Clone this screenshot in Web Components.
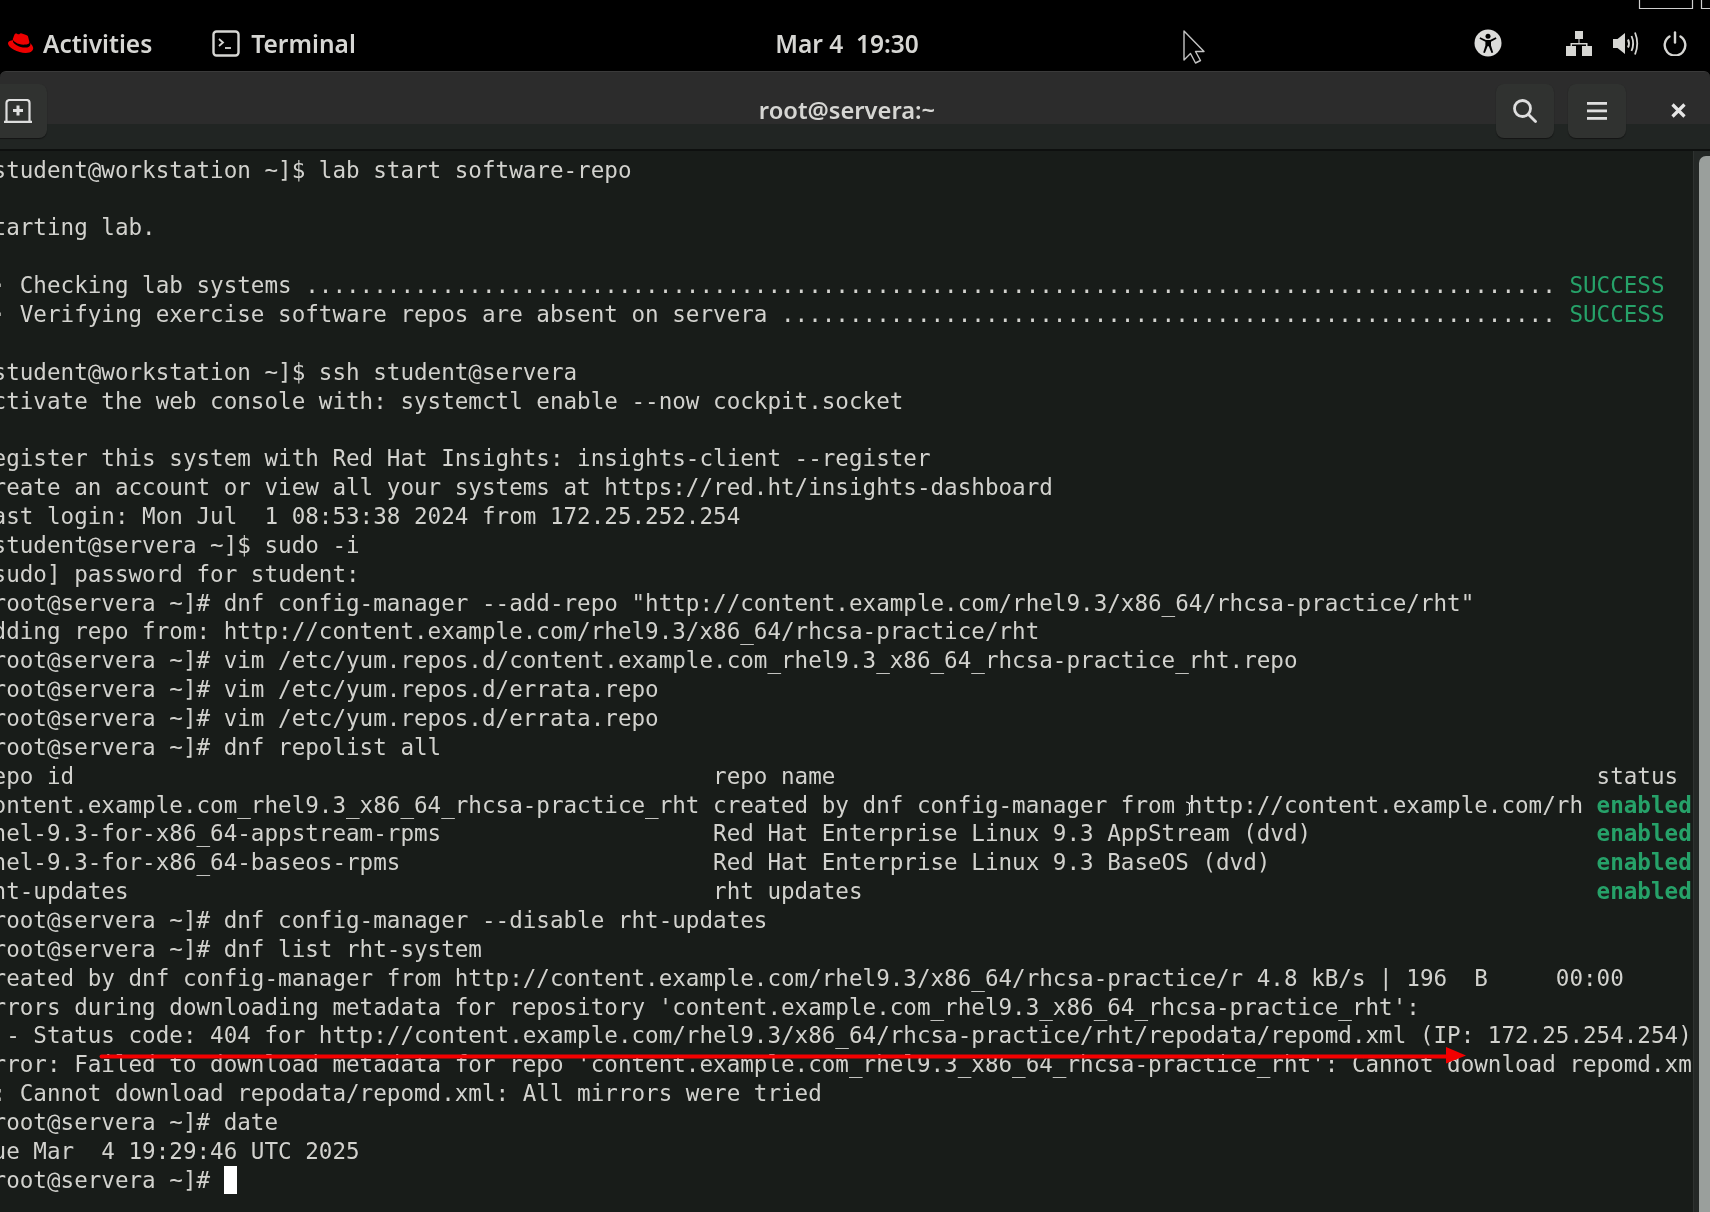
<!DOCTYPE html>
<html><head><meta charset="utf-8"><style>
html,body{margin:0;height:100%;background:#000;overflow:hidden}
body{width:1710px;height:1212px;display:flex;flex-direction:column;position:relative}
</style></head><body>
<top-panel></top-panel>
<term-window></term-window>
<screen-overlay></screen-overlay>
<script>
const UI='"Noto Sans","Open Sans",sans-serif';
customElements.define('top-panel',class extends HTMLElement{constructor(){super();this.attachShadow({mode:'open'}).innerHTML=`<style>
:host{display:grid;grid-template-columns:1fr auto 1fr;align-items:center;height:71px;flex:none;background:#000;color:#d6d6d3;font:600 24.500px ${UI};padding:15px 16px 0 0;box-sizing:border-box;filter:blur(.55px)}
.l,.r{display:flex;align-items:center}
.l{padding-left:8px}
.r{justify-content:flex-end;padding-right:7px}
svg{display:block;flex:none}
.act{margin-left:9px}
.tico{margin-left:60px}
.tt{margin-left:11px}
.clock{white-space:pre}
</style>
<div class="l">
<svg width="26" height="21" viewBox="0 0 26 21"><path fill="#e00" d="M17.3 11.6c1.7 0 4.1-.4 4.1-2.3 0-.2 0-.3-.1-.5l-1-4.400c-.2-1-.4-1.400-2.200-2.300C16.700 1.400 13.700.2 12.800.2c-.8 0-1.100 1.100-2.100 1.100S9 .5 8.100.5 6.600 1.100 6.200 2.300c0 0-1.200 3.400-1.400 3.900 0 .1 0 .2 0 .3 0 1.400 5.400 5.800 12.500 5.100z"/><path fill="#e00" d="M22.100 9.900c.3 1.200.3 1.300.3 1.500 0 2-2.200 3.100-5.100 3.100C10.700 14.500 5 10.700 5 8.200c0-.4.1-.7.200-1C2.800 7.300 0 8 0 10.600 0 14.800 9.900 20 17.700 20c6 0 7.500-2.700 7.500-4.900 0-1.700-1.500-3.700-3.100-5.200z"/></svg>
<span class="act">Activities</span>
<svg class="tico" width="28" height="27" viewBox="0 0 28 27" fill="none" stroke="#d6d6d3"><rect x="1.500" y="1.500" width="25" height="24" rx="3" stroke-width="2.400"/><path d="M7 9l4 3.500-4 3.500" stroke-width="1.800"/><path d="M13 18h6" stroke-width="1.800"/></svg>
<span class="tt">Terminal</span>
</div>
<div class="clock">Mar 4  19:30</div>
<div class="r">
<svg width="28" height="28" viewBox="0 0 28 28" style="margin-right:64px"><circle cx="14" cy="14" r="13.500" fill="#dcdcda"/><circle cx="14" cy="7.300" r="2.500" fill="#000"/><path fill="#000" d="M5.500 9.800l.7-1.500L12 11h4l5.800-2.700.7 1.500-5.500 3v3.700l2.200 7-1.700.6-2.700-6.800h-1.200l-2.700 6.800-1.700-.6 2.200-7v-3.700z"/></svg>
<svg width="26" height="25" viewBox="0 0 26 25" style="margin-right:21px" fill="#d6d6d3"><rect x="9" y="0" width="8" height="8"/><rect x="0" y="15" width="10" height="10"/><rect x="16" y="15" width="10" height="10"/><path d="M12.500 8v4H4.500v3h1.500v-1.500h14V15h1.500v-3H13.500V8z"/></svg>
<svg width="26" height="25" viewBox="0 0 26 25" style="margin-right:24px" fill="none" stroke="#d6d6d3"><path fill="#d6d6d3" stroke="none" d="M0 8h4.500L12 2v21l-7.500-6H0z"/><path d="M15 8.500q2 4 0 8" stroke-width="2"/><path d="M18.500 5q3.300 7.500 0 15" stroke-width="1.800"/><path d="M22 1.500q4.500 11 0 22" stroke-width="1.800"/></svg>
<svg width="24" height="25" viewBox="0 0 24 25" fill="none" stroke="#d6d6d3" stroke-width="2.400" stroke-linecap="round"><path d="M12 1.500v10"/><path d="M6.500 5.500a10.300 10.300 0 1 0 11 0"/></svg>
</div>`}});

customElements.define('tool-btn',class extends HTMLElement{constructor(){super();this.attachShadow({mode:'open'}).innerHTML=`<style>
:host{display:flex;align-items:center;justify-content:center;width:58px;height:54px;flex:none;box-sizing:border-box;border-radius:8px;background:#303230;box-shadow:0 1px 1px #141514}
</style><slot></slot>`}});

customElements.define('header-bar',class extends HTMLElement{constructor(){super();this.attachShadow({mode:'open'}).innerHTML=`<style>
:host{display:grid;grid-template-columns:1fr auto 1fr;align-items:center;height:80px;padding-right:16px;flex:none;box-sizing:border-box;background:linear-gradient(#2c2c2c 0,#2c2c2c 68%,#212523 68%,#212523 100%);border-top:1px solid #3a3a3a;border-bottom:2px solid #0e100f;border-radius:6px 6px 0 0;color:#d6d6d3;filter:blur(.5px)}
.l,.r{display:flex;align-items:center}
.l{margin-left:-11px}
.r{justify-content:flex-end}
.t{font:600 23.700px ${UI};margin-top:-1px}
tool-btn+tool-btn{margin-left:14px}
.x{margin:0 8px 0 45px}
svg{display:block}
</style>
<div class="l"><tool-btn><svg width="28" height="24" viewBox="0 0 28 24" fill="none" stroke="#dedede" stroke-width="2.200"><path d="M2.500 22.500V4a3 3 0 0 1 3-3h17a3 3 0 0 1 3 3v18.500M0 22.800h28"/><path stroke-width="3" d="M14 6.500v10M9 11.500h10"/></svg></tool-btn></div>
<div class="t">root@servera:~</div>
<div class="r">
<tool-btn><svg width="24" height="24" viewBox="0 0 24 24" fill="none" stroke="#dedede" stroke-width="2.800" stroke-linecap="round"><circle cx="9.500" cy="9.500" r="8"/><path d="M15.500 15.500l7 7"/></svg></tool-btn>
<tool-btn><svg width="20" height="18" viewBox="0 0 20 18" fill="#dedede"><rect width="20" height="2.800" y="0"/><rect width="20" height="2.800" y="7.500"/><rect width="20" height="2.800" y="15"/></svg></tool-btn>
<svg class="x" width="15" height="15" viewBox="0 0 15 15" stroke="#e6e6e6" stroke-width="3.200"><path d="M1.500 1.500l12 12M13.500 1.500l-12 12"/></svg>
</div>`}});

const P='[root@servera ~]# ',S='[student@workstation ~]$ ',U='[student@servera ~]$ ';
const LINES=[
S+'lab start software-repo','','Starting lab.','',
' · Checking lab systems '+'.'.repeat(92)+' <g>SUCCESS</g>',
' · Verifying exercise software repos are absent on servera '+'.'.repeat(57)+' <g>SUCCESS</g>','',
S+'ssh student@servera',
'Activate the web console with: systemctl enable --now cockpit.socket','',
'Register this system with Red Hat Insights: insights-client --register',
'Create an account or view all your systems at https://red.ht/insights-dashboard',
'Last login: Mon Jul  1 08:53:38 2024 from 172.25.252.254',
U+'sudo -i','[sudo] password for student:',
P+'dnf config-manager --add-repo "http://content.example.com/rhel9.3/x86_64/rhcsa-practice/rht"',
'Adding repo from: http://content.example.com/rhel9.3/x86_64/rhcsa-practice/rht',
P+'vim /etc/yum.repos.d/content.example.com_rhel9.3_x86_64_rhcsa-practice_rht.repo',
P+'vim /etc/yum.repos.d/errata.repo',P+'vim /etc/yum.repos.d/errata.repo',P+'dnf repolist all',
'repo id'.padEnd(54)+'repo name'.padEnd(65)+'status',
'content.example.com_rhel9.3_x86_64_rhcsa-practice_rht created by dnf config-manager from http://content.example.com/rh <b>enabled</b>',
'rhel-9.3-for-x86_64-appstream-rpms'.padEnd(54)+'Red Hat Enterprise Linux 9.3 AppStream (dvd)'.padEnd(65)+'<b>enabled</b>',
'rhel-9.3-for-x86_64-baseos-rpms'.padEnd(54)+'Red Hat Enterprise Linux 9.3 BaseOS (dvd)'.padEnd(65)+'<b>enabled</b>',
'rht-updates'.padEnd(54)+'rht updates'.padEnd(65)+'<b>enabled</b>',
P+'dnf config-manager --disable rht-updates',P+'dnf list rht-system',
'Created by dnf config-manager from http://content.example.com/rhel9.3/x86_64/rhcsa-practice/r 4.8 kB/s | 196  B     00:00',
"Errors during downloading metadata for repository 'content.example.com_rhel9.3_x86_64_rhcsa-practice_rht':",
'  - Status code: 404 for http://content.example.com/rhel9.3/x86_64/rhcsa-practice/rht/repodata/repomd.xml (IP: 172.25.254.254)',
"Error: Failed to download metadata for repo 'content.example.com_rhel9.3_x86_64_rhcsa-practice_rht': Cannot download repomd.xm",
'l: Cannot download repodata/repomd.xml: All mirrors were tried',
P+'date','Tue Mar  4 19:29:46 UTC 2025',P+'<i></i>'];

customElements.define('term-view',class extends HTMLElement{constructor(){super();this.attachShadow({mode:'open'}).innerHTML=`<style>
:host{display:block;flex:1;min-width:0;overflow:hidden;box-sizing:border-box;padding-top:4.700px;color:#d2d2ce;font:22.580px/28.870px "DejaVu Sans Mono",monospace;filter:blur(.5px)}
.c{margin-left:-21px}
.ln{white-space:pre;height:28.870px}
g-t{color:#26a269}
b{color:#26a269;font-weight:700}
i{display:inline-block;width:13.600px;height:28px;background:#fff;vertical-align:top}
</style><div class="c">${LINES.map(l=>'<div class="ln">'+l.replace(/<g>/g,'<g-t>').replace(/<\/g>/g,'</g-t>')+'</div>').join('')}</div>`}});

customElements.define('term-scroll',class extends HTMLElement{constructor(){super();this.attachShadow({mode:'open'}).innerHTML=`<style>
:host{display:block;width:17px;flex:none;box-sizing:border-box;padding:5px 0 0 5px;background:#242826;border-left:1px solid #2e3230}
.t{height:100%;background:#9a9f9c;border-radius:7px 0 0 0}
</style><div class="t"></div>`}});

customElements.define('term-window',class extends HTMLElement{constructor(){super();this.attachShadow({mode:'open'}).innerHTML=`<style>
:host{display:flex;flex-direction:column;flex:1;min-height:0}
.b{display:flex;flex:1;min-height:0;background:#181c19}
</style><header-bar></header-bar><div class="b"><term-view></term-view><term-scroll></term-scroll></div>`}});

customElements.define('screen-overlay',class extends HTMLElement{constructor(){super();this.attachShadow({mode:'open'}).innerHTML=`<style>
:host{display:block;position:absolute;inset:0;pointer-events:none}
svg{position:absolute;left:0;top:0}
</style><svg width="1710" height="1212" viewBox="0 0 1710 1212" fill="none">
<path d="M1639.500 0v8.500h53V0M1701.500 0v8.500H1710" stroke="#cfcfcf" stroke-width="1.200"/>
<path d="M1184 31v29l6.500-6.500 5 9.500 5-2.500-5-9h8.500z" fill="#000" stroke="#c4c4c4" stroke-width="1.400" stroke-linejoin="round"/>
<path d="M1186 802c2 0 3 .8 3.500 2v9c-.5 1.200-1.500 2-3.500 2M1193 802c-2 0-3 .8-3.500 2" stroke="#e8e8e8" stroke-width="1.200"/>
<rect x="99.500" y="1054.500" width="1350" height="4" rx="2" fill="#f30000"/>
<path d="M1446 1047l20 8.500-20 8z" fill="#f30000"/>
</svg>`}});
</script>
</body></html>
